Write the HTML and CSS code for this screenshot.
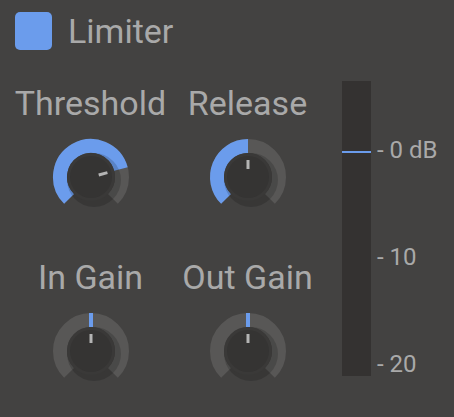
FILE: index.html
```html
<!DOCTYPE html>
<html>
<head>
    <title>Limiter</title>
    <link rel="stylesheet" href="styles.css">
</head>
<body>
    <div class="header">
        <div class="toggle"></div>
        <div class="title">Limiter</div>
    </div>

    <div class="main">
        <div class="knobs">
            <div class="knob-cell">
                <div class="knob-label">Threshold</div>
                <svg class="knob" width="80" height="80" viewBox="0 0 80 80">
                    <path class="track" d="M18.08 61.92 A31 31 0 1 1 61.92 61.92"/>
                    <path class="value" d="M18.08 61.92 A31 31 0 1 1 69.94 31.98"/>
                    <circle class="shadow" cx="43" cy="43" r="27"/>
                    <circle class="body" cx="40" cy="40" r="24"/>
                    <circle class="face" cx="40" cy="40" r="21"/>
                    <rect class="pointer" x="38.5" y="23" width="3" height="9" transform="rotate(75 40 40)"/>
                </svg>
            </div>
            <div class="knob-cell">
                <div class="knob-label">Release</div>
                <svg class="knob" width="80" height="80" viewBox="0 0 80 80">
                    <path class="track" d="M18.08 61.92 A31 31 0 1 1 61.92 61.92"/>
                    <path class="value" d="M18.08 61.92 A31 31 0 0 1 40 9"/>
                    <circle class="shadow" cx="43" cy="43" r="27"/>
                    <circle class="body" cx="40" cy="40" r="24"/>
                    <circle class="face" cx="40" cy="40" r="21"/>
                    <rect class="pointer" x="38.5" y="23" width="3" height="9"/>
                </svg>
            </div>
            <div class="knob-cell">
                <div class="knob-label">In Gain</div>
                <svg class="knob" width="80" height="80" viewBox="0 0 80 80">
                    <path class="track" d="M18.08 61.92 A31 31 0 1 1 61.92 61.92"/>
                    <rect class="tick" x="38" y="2" width="4" height="14"/>
                    <circle class="shadow" cx="43" cy="43" r="27"/>
                    <circle class="body" cx="40" cy="40" r="24"/>
                    <circle class="face" cx="40" cy="40" r="21"/>
                    <rect class="pointer" x="38.5" y="23" width="3" height="9"/>
                </svg>
            </div>
            <div class="knob-cell">
                <div class="knob-label">Out Gain</div>
                <svg class="knob" width="80" height="80" viewBox="0 0 80 80">
                    <path class="track" d="M18.08 61.92 A31 31 0 1 1 61.92 61.92"/>
                    <rect class="tick" x="38" y="2" width="4" height="14"/>
                    <circle class="shadow" cx="43" cy="43" r="27"/>
                    <circle class="body" cx="40" cy="40" r="24"/>
                    <circle class="face" cx="40" cy="40" r="21"/>
                    <rect class="pointer" x="38.5" y="23" width="3" height="9"/>
                </svg>
            </div>
        </div>

        <div class="meter">
            <div class="meter-bar">
                <div class="meter-level"></div>
            </div>
            <div class="meter-scale">
                <div>- 0 dB</div>
                <div>- 10</div>
                <div>- 20</div>
            </div>
        </div>
    </div>
</body>
</html>
```

FILE: styles.css
```css
body {
    margin: 0;
    min-height: 100vh;
    background: #434241;
    color: #a9a9a9;
    font-family: Roboto, "Liberation Sans", sans-serif;
}
.header {
    display: flex;
    align-items: center;
    gap: 16px;
    padding: 11px 0 0 15px;
}
.toggle {
    width: 37px;
    height: 38px;
    border-radius: 5px;
    background: #6b9cec;
}
.title {
    font-size: 34px;
    line-height: 38px;
    padding-top: 1px;
}
.main {
    display: flex;
    padding: 31px 0 0 12px;
}
.knobs {
    display: grid;
    grid-template-columns: 157px 157px;
    row-gap: 40px;
    margin-top: 2px;
}
.knob-cell {
    display: flex;
    flex-direction: column;
    align-items: center;
}
.knob-label {
    font-size: 34px;
    line-height: 40px;
    white-space: nowrap;
}
.knob {
    display: block;
    margin-top: 14px;
}
.knob .track {
    fill: none;
    stroke: #585756;
    stroke-width: 14;
}
.knob .value {
    fill: none;
    stroke: #6b9cec;
    stroke-width: 14;
}
.knob .tick {
    fill: #6b9cec;
}
.knob .shadow {
    fill: rgba(0, 0, 0, 0.16);
}
.knob .body {
    fill: #3a3938;
}
.knob .face {
    fill: #353433;
}
.knob .pointer {
    fill: #b4b4b4;
}
.meter {
    display: flex;
    margin-left: 16px;
    gap: 6px;
}
.meter-bar {
    position: relative;
    width: 29px;
    height: 295px;
    background: #343231;
}
.meter-level {
    position: absolute;
    left: 0;
    right: 0;
    top: 70px;
    height: 2px;
    background: #6b9cec;
}
.meter-scale {
    display: flex;
    flex-direction: column;
    gap: 79px;
    padding-top: 55px;
    font-size: 24px;
    line-height: 28px;
    white-space: nowrap;
}
```
